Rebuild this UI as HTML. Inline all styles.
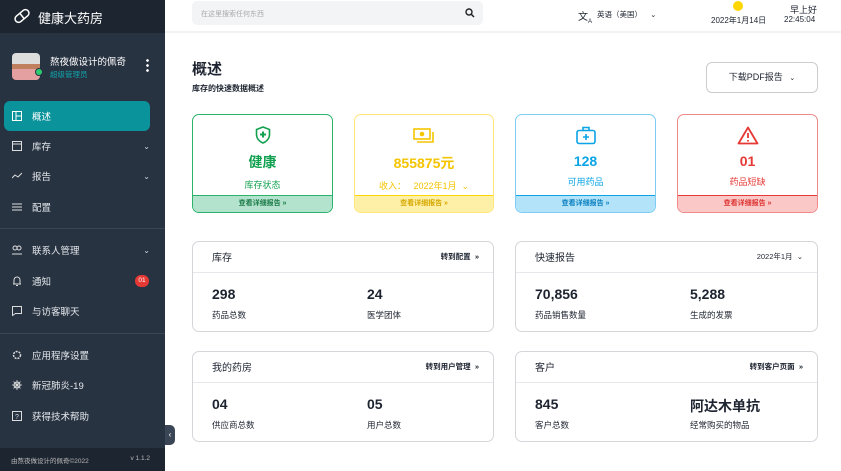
<!DOCTYPE html>
<html><head><meta charset="utf-8"><style>
*{box-sizing:border-box;margin:0;padding:0}
body{width:841px;height:471px;overflow:hidden;background:#fff;font-family:"Liberation Sans","Noto Sans CJK SC",sans-serif;position:relative;color:#1d2430}
.sb{position:absolute;left:0;top:0;width:165px;height:471px;background:#283342}
.sbh{position:absolute;left:0;top:0;width:165px;height:33px;background:#1d2530;color:#fff;font-size:13px}
.it{position:absolute;left:4px;width:146px;height:30px;color:#e5e8ec;font-size:9.5px;display:flex;align-items:center;padding-left:8px}
.it svg{margin-right:10px}
.it .ch{position:absolute;right:0;font-size:8px;color:#cdd}
.act{background:#0b939b;border-radius:6px;color:#fff}
.dv{position:absolute;left:0;width:165px;height:1px;background:#3a4656}
.top{position:absolute;left:165px;top:0;right:0;height:33px;border-bottom:2px solid #f1f2f4}
.c{position:absolute;border-radius:7px;overflow:hidden;text-align:center}
.c .ft{position:absolute;left:0;right:0;bottom:0;height:17px;font-size:7px;line-height:16px;font-weight:bold}
.big{font-size:14px;font-weight:bold;margin-top:3px}
.sm{font-size:9px;margin-top:6px}
.p{position:absolute;border:1px solid #d4d6da;border-radius:7px}
.p .h{height:31px;border-bottom:1px solid #e6e8eb;font-size:10px;padding:7px 19px;position:relative}
.p .h span{position:absolute;right:14px;top:9px;font-size:7.5px;font-weight:bold}
.n{position:absolute;top:44px;font-size:14px;font-weight:bold}
.l{position:absolute;top:67px;font-size:8.5px}
</style></head><body>
<div class="sb">
<div class="sbh"><svg style="position:absolute;left:13px;top:7px" width="18" height="18" viewBox="0 0 18 18"><rect x="1" y="5.5" width="16" height="7" rx="3.5" transform="rotate(-40 9 9)" fill="none" stroke="#fff" stroke-width="1.5"/><line x1="7" y1="6.5" x2="11" y2="11.5" stroke="#fff" stroke-width="1.5"/></svg><span style="position:absolute;left:38px;top:8px">健康大药房</span></div>
<div style="position:absolute;left:12px;top:53px;width:28px;height:27px;border-radius:4px;background:linear-gradient(#ddd 0 40%,#c08060 40% 60%,#e4a0a0 60%)"></div>
<div style="position:absolute;left:35px;top:68px;width:8px;height:8px;border-radius:50%;background:#2ecc71;border:1px solid #283342"></div>
<div style="position:absolute;left:50px;top:54px;color:#fff;font-size:9.5px">熬夜做设计的佩奇</div>
<div style="position:absolute;left:50px;top:69px;color:#0fa5ad;font-size:7.5px">超级管理员</div>
<div style="position:absolute;left:146px;top:58px;width:3px;height:14px;background:radial-gradient(circle,#fff 1.2px,transparent 1.5px) 0 0/3px 5px"></div>
<div class="it act" style="top:101px"><svg width="10" height="10"><rect x=".5" y=".5" width="9" height="9" fill="none" stroke="#fff"/><line x1="4" y1="0" x2="4" y2="10" stroke="#fff"/><line x1="4" y1="5" x2="10" y2="5" stroke="#fff"/></svg>概述</div>
<div class="it" style="top:131px"><svg width="10" height="10"><rect x=".5" y=".5" width="9" height="9" fill="none" stroke="#ddd"/><line x1="0" y1="3" x2="10" y2="3" stroke="#ddd"/></svg>库存<span class="ch">⌄</span></div>
<div class="it" style="top:161px"><svg width="10" height="10"><path d="M0 7L3 4L6 6L10 2" fill="none" stroke="#ddd"/></svg>报告<span class="ch">⌄</span></div>
<div class="it" style="top:192px"><svg width="10" height="10"><path d="M0 2H10M0 5H10M0 8H10" stroke="#ddd"/></svg>配置</div>
<div class="dv" style="top:228px"></div>
<div class="it" style="top:235px"><svg width="10" height="10"><circle cx="3" cy="3" r="2" fill="none" stroke="#ddd"/><circle cx="7" cy="3" r="2" fill="none" stroke="#ddd"/><path d="M0 9H10" stroke="#ddd"/></svg>联系人管理<span class="ch">⌄</span></div>
<div class="it" style="top:266px"><svg width="10" height="10"><path d="M2 8V4a3 3 0 016 0v4H1h8M4 9.5h2" fill="none" stroke="#ddd"/></svg>通知<span style="position:absolute;right:1px;width:14px;height:12px;border-radius:6px;background:#e53935;color:#fff;font-size:6.5px;text-align:center;line-height:12px">01</span></div>
<div class="it" style="top:296px"><svg width="10" height="10"><path d="M.5.5h9v7h-6l-3 2z" fill="none" stroke="#ddd"/></svg>与访客聊天</div>
<div class="dv" style="top:333px"></div>
<div class="it" style="top:340px"><svg width="10" height="10"><circle cx="5" cy="5" r="3.5" fill="none" stroke="#ddd" stroke-width="1.5" stroke-dasharray="2 1"/></svg>应用程序设置</div>
<div class="it" style="top:370px"><svg width="10" height="10"><circle cx="5" cy="5" r="3" fill="none" stroke="#ddd"/><path d="M5 0v10M0 5h10M1.5 1.5l7 7M8.5 1.5l-7 7" stroke="#ddd" stroke-width=".8"/></svg>新冠肺炎-19</div>
<div class="it" style="top:401px"><svg width="10" height="10"><rect x=".5" y=".5" width="9" height="9" fill="none" stroke="#ddd"/><text x="3" y="8" font-size="7" fill="#ddd">?</text></svg>获得技术帮助</div>
<div style="position:absolute;left:0;top:448px;width:165px;height:23px;background:#1d2530;color:#bbb;font-size:6.5px;padding:7px 11px">由熬夜做设计的佩奇©2022<span style="position:absolute;right:15px">v 1.1.2</span></div>
</div>
<div style="position:absolute;left:165px;top:425px;width:10px;height:20px;background:#3a4656;border-radius:0 5px 5px 0;color:#fff;font-size:8px;line-height:20px;text-align:center">‹</div>
<div class="top">
<div style="position:absolute;left:27px;top:1px;width:291px;height:24px;background:#f3f4f6;border-radius:5px;font-size:7px;color:#aaa;padding:8px 9px">在这里搜索任何东西<svg style="position:absolute;right:8px;top:7px" width="10" height="10"><circle cx="4" cy="4" r="3" fill="none" stroke="#222" stroke-width="1.4"/><path d="M6 6l3 3" stroke="#222" stroke-width="1.5"/></svg></div>
<div style="position:absolute;left:413px;top:8px;font-size:10px">文<sub style="font-size:6px">A</sub></div>
<div style="position:absolute;left:432px;top:9px;font-size:7.5px">英语（美国） <span style="margin-left:6px">⌄</span></div>
<div style="position:absolute;left:568px;top:1px;width:10px;height:10px;border-radius:50%;background:#ffd600"></div>
<div style="position:absolute;left:546px;top:15px;font-size:8px">2022年1月14日</div>
<div style="position:absolute;left:625px;top:3px;font-size:9px">早上好</div>
<div style="position:absolute;left:619px;top:15px;font-size:8px">22:45:04</div>
</div>
<div style="position:absolute;left:192px;top:58px;font-size:15px;font-weight:bold">概述</div>
<div style="position:absolute;left:192px;top:83px;font-size:8px;font-weight:bold">库存的快速数据概述</div>
<div style="position:absolute;left:706px;top:62px;width:112px;height:31px;border:1px solid #ccc;border-radius:6px;font-size:9px;text-align:center;line-height:29px">下载PDF报告 <span style="font-size:7px;margin-left:4px">⌄</span></div>

<div class="c" style="left:192px;top:114px;width:141px;height:99px;border:1px solid #2bb36b;color:#12a150">
<svg style="margin-top:11px" width="16" height="18" viewBox="0 0 16 18"><path d="M8 1L1.5 3.5v5c0 4 3 7 6.5 8.5 3.5-1.5 6.5-4.5 6.5-8.5v-5z" fill="none" stroke="#12a150" stroke-width="1.6"/><path d="M8 5.5v6M5 8.5h6" stroke="#12a150" stroke-width="2"/></svg>
<div class="big">健康</div><div class="sm">库存状态</div>
<div class="ft" style="background:#b3e3cc;border-top:1px solid #2bb36b;color:#1b7a48">查看详细报告 »</div></div>
<div class="c" style="left:354px;top:114px;width:140px;height:99px;border:1px solid #ffe57a;color:#f5c400">
<svg style="margin-top:13px" width="22" height="16" viewBox="0 0 22 16"><rect x="1" y="1" width="16" height="10" fill="none" stroke="#f5c400" stroke-width="1.6"/><circle cx="9" cy="6" r="2.3" fill="#f5c400"/><path d="M4 14h16V4" fill="none" stroke="#f5c400" stroke-width="1.6"/></svg>
<div class="big" style="margin-top:4px">855875元</div><div class="sm">收入：&nbsp;&nbsp;&nbsp;2022年1月 &nbsp;⌄</div>
<div class="ft" style="background:#fff0a8;border-top:1px solid #ffd700;color:#d5a800">查看详细报告 »</div></div>
<div class="c" style="left:515px;top:114px;width:141px;height:99px;border:1px solid #7cccf5;color:#0ba4e6">
<svg style="margin-top:11px" width="20" height="19" viewBox="0 0 20 19"><rect x="1" y="4.5" width="18" height="13" rx="2" fill="none" stroke="#0ba4e6" stroke-width="1.6"/><path d="M7 4.5V1.5h6v3M10 8v6M7 11h6" fill="none" stroke="#0ba4e6" stroke-width="1.6"/></svg>
<div class="big">128</div><div class="sm">可用药品</div>
<div class="ft" style="background:#b3e3f8;border-top:1px solid #0ba4e6;color:#0a7fc0">查看详细报告 »</div></div>
<div class="c" style="left:677px;top:114px;width:141px;height:99px;border:1px solid #f08a8a;color:#e53935">
<svg style="margin-top:11px" width="22" height="19" viewBox="0 0 22 19"><path d="M11 1.5L1.5 17.5h19z" fill="none" stroke="#e53935" stroke-width="1.8" stroke-linejoin="round"/><path d="M11 7v5M11 14v1.5" stroke="#e53935" stroke-width="1.8"/></svg>
<div class="big">01</div><div class="sm">药品短缺</div>
<div class="ft" style="background:#fac8c6;border-top:1px solid #e53935;color:#d33">查看详细报告 »</div></div>

<div class="p" style="left:192px;top:241px;width:302px;height:91px"><div class="h">库存<span>转到配置 &nbsp;»</span></div>
<div class="n" style="left:19px">298</div><div class="l" style="left:19px">药品总数</div><div class="n" style="left:174px">24</div><div class="l" style="left:174px">医学团体</div></div>
<div class="p" style="left:515px;top:241px;width:303px;height:91px"><div class="h">快速报告<span style="font-weight:normal">2022年1月 &nbsp;⌄</span></div>
<div class="n" style="left:19px">70,856</div><div class="l" style="left:19px">药品销售数量</div><div class="n" style="left:174px">5,288</div><div class="l" style="left:174px">生成的发票</div></div>
<div class="p" style="left:192px;top:351px;width:302px;height:91px"><div class="h">我的药房<span>转到用户管理 &nbsp;»</span></div>
<div class="n" style="left:19px">04</div><div class="l" style="left:19px">供应商总数</div><div class="n" style="left:174px">05</div><div class="l" style="left:174px">用户总数</div></div>
<div class="p" style="left:515px;top:351px;width:303px;height:91px"><div class="h">客户<span>转到客户页面 &nbsp;»</span></div>
<div class="n" style="left:19px">845</div><div class="l" style="left:19px">客户总数</div><div class="n" style="left:174px">阿达木单抗</div><div class="l" style="left:174px">经常购买的物品</div></div>
</body></html>
